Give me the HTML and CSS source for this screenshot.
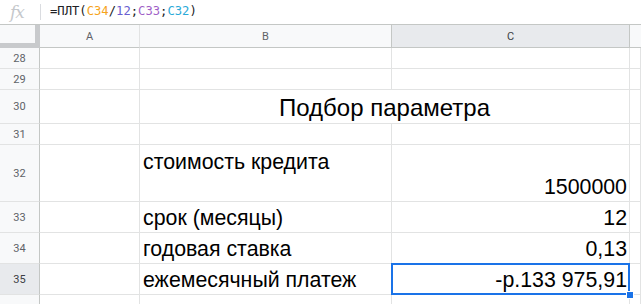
FILE: index.html
```html
<!DOCTYPE html>
<html lang="ru">
<head>
<meta charset="utf-8">
<title>Подбор параметра</title>
<link rel="stylesheet" href="styles.css">
</head>
<body>
<div class="formula-bar">
  <span class="fx">fx</span>
  <span class="fx-sep"></span>
  <span class="formula">=ПЛТ(<span class="ref-orange">C34</span>/<span class="num">12</span>;<span class="ref-purple">C33</span>;<span class="ref-cyan">C32</span>)</span>
</div>
<div class="sheet">
  <div class="corner"></div>
  <div class="col-head">A</div>
  <div class="col-head">B</div>
  <div class="col-head col-sel">C</div>
  <div class="col-head col-after"></div>

  <div class="row-head">28</div><div class="cell"></div><div class="cell"></div><div class="cell"></div><div class="cell"></div>
  <div class="row-head">29</div><div class="cell"></div><div class="cell"></div><div class="cell"></div><div class="cell"></div>
  <div class="row-head">30</div><div class="cell"></div><div class="cell title">Подбор параметра</div><div class="cell"></div>
  <div class="row-head">31</div><div class="cell"></div><div class="cell"></div><div class="cell"></div><div class="cell"></div>
  <div class="row-head">32</div><div class="cell"></div><div class="cell text top">стоимость кредита</div><div class="cell text num-val">1500000</div><div class="cell"></div>
  <div class="row-head">33</div><div class="cell"></div><div class="cell text">срок (месяцы)</div><div class="cell text num-val">12</div><div class="cell"></div>
  <div class="row-head">34</div><div class="cell"></div><div class="cell text">годовая ставка</div><div class="cell text num-val">0,13</div><div class="cell"></div>
  <div class="row-head row-sel">35</div><div class="cell"></div><div class="cell text">ежемесячный платеж</div><div class="cell text num-val selected">-р.133 975,91</div><div class="cell"></div>
  <div class="row-head">36</div><div class="cell"></div><div class="cell"></div><div class="cell"></div><div class="cell"></div>
</div>
</body>
</html>
```
FILE: styles.css
```css
html, body {
  margin: 0;
  padding: 0;
  background: #fff;
  overflow: hidden;
}
body {
  width: 641px;
  height: 304px;
  font-family: "Liberation Sans", Arial, sans-serif;
}
.formula-bar {
  height: 25px;
  box-sizing: border-box;
  border-bottom: 1px solid #c4c7c5;
  display: flex;
  align-items: center;
  background: #fff;
}
.fx {
  width: 40px;
  text-align: center;
  font-family: "DejaVu Serif", serif;
  font-style: italic;
  font-size: 17px;
  color: #c5c8cc;
  letter-spacing: -1px;
  padding-right: 6px;
  box-sizing: border-box;
}
.fx-sep {
  width: 1px;
  height: 16px;
  background: #dadce0;
}
.formula {
  margin-left: 9px;
  font-family: "DejaVu Sans Mono", "Liberation Mono", monospace;
  font-size: 12.2px;
  color: #202124;
  padding-bottom: 2px;
}
.ref-orange { color: #f6a31c; }
.num { color: #6a5fd0; }
.ref-purple { color: #9f5fc7; }
.ref-cyan { color: #2aaad8; }

.sheet {
  display: grid;
  grid-template-columns: 40px 100px 252px 238px 11px;
  grid-template-rows: 23px 21px 21px 34px 21px 57px 31px 31px 31px 31px;
}
.sheet > div {
  box-sizing: border-box;
}
.corner {
  background: #f8f9fa;
  border-right: 5px solid #c8cacc;
  border-bottom: 5px solid #c8cacc;
}
.col-head {
  background: #f8f9fa;
  border-right: 1px solid #e2e3e3;
  border-bottom: 1px solid #c4c7c5;
  display: flex;
  align-items: center;
  justify-content: center;
  font-family: Roboto, "Liberation Sans", sans-serif;
  font-size: 11px;
  color: #5f6368;
}
.col-sel {
  background: #e8eaed;
  border-left: 1px solid #c4c7c5;
  border-right: 1px solid #c4c7c5;
  color: #3c4043;
  margin-left: -1px;
}
.col-after {
  border-right: none;
}
.row-head {
  background: #f8f9fa;
  border-right: 1px solid #c4c7c5;
  border-bottom: 1px solid #e2e3e3;
  display: flex;
  align-items: center;
  justify-content: center;
  font-family: Roboto, "Liberation Sans", sans-serif;
  font-size: 11px;
  color: #5f6368;
}
.row-sel {
  background: #e8eaed;
  color: #3c4043;
}
.cell {
  border-right: 1px solid #e2e3e3;
  border-bottom: 1px solid #e2e3e3;
  background: #fff;
}
.title {
  grid-column: span 2;
  display: flex;
  align-items: flex-end;
  justify-content: center;
  font-size: 24px;
  color: #000;
  padding-bottom: 1px;
  white-space: nowrap;
}
.text {
  display: flex;
  align-items: flex-end;
  font-size: 21.33px;
  color: #000;
  padding: 0 3px 1px 3px;
  white-space: nowrap;
}
.top {
  align-items: flex-start;
  padding-top: 5px;
}
.num-val {
  justify-content: flex-end;
  padding-right: 2px;
}
.selected {
  position: relative;
}
.selected::after {
  content: "";
  position: absolute;
  left: -1px;
  top: -1px;
  right: -1px;
  bottom: -1px;
  border: 2px solid #1a73e8;
}
.selected::before {
  content: "";
  position: absolute;
  right: -5px;
  bottom: -5px;
  width: 6px;
  height: 6px;
  background: #1a73e8;
  border: 1px solid #fff;
  z-index: 2;
}
```
